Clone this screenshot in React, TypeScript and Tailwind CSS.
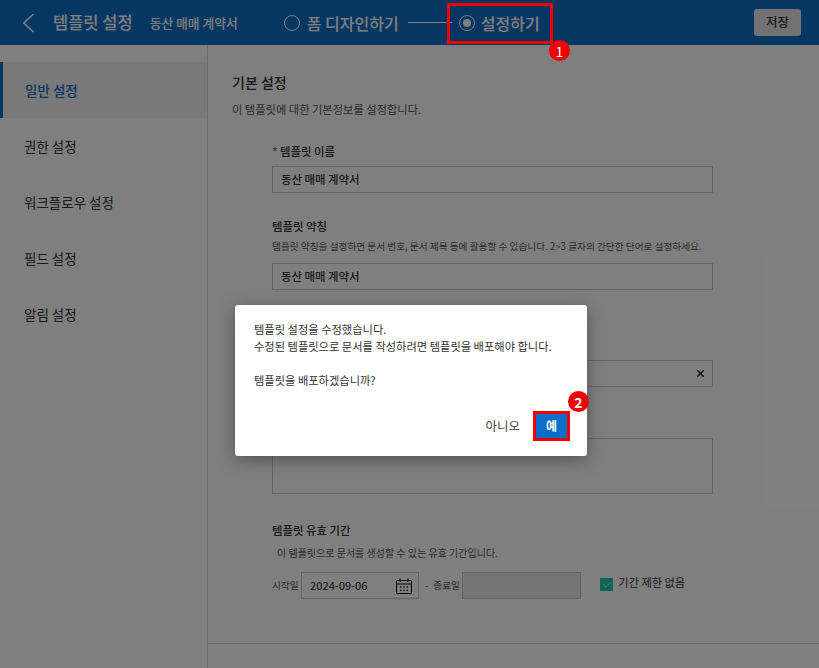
import { Check, X } from 'lucide-react';

const MENU = ['일반 설정', '권한 설정', '워크플로우 설정', '필드 설정', '알림 설정'];

function CalendarIcon() {
  return (
    <svg width="16" height="16" viewBox="0 0 16 16" fill="none" stroke="#111" strokeWidth="1.1">
      <rect x="0.5" y="2.5" width="15" height="13" rx="1" />
      <path d="M0.5 6h15M4 0.5v3.5M12 0.5v3.5" />
      <path d="M4 9h1.4M7.3 9h1.4M10.6 9h1.4M4 12.3h1.4M7.3 12.3h1.4M10.6 12.3h1.4" strokeWidth="1.3" />
    </svg>
  );
}

function Badge({ n }: { n: number }) {
  return (
    <span className="flex h-[21px] w-[21px] items-center justify-center rounded-full bg-[#f00000] text-[14px] leading-none text-white">
      {n}
    </span>
  );
}

function Field({ value }: { value: string }) {
  return (
    <div className="flex h-[27px] w-[441px] items-center border border-[#c8c8c8] bg-white px-[8px] text-[11.4px] font-medium text-[#333]">
      {value}
    </div>
  );
}

export default function App() {
  return (
    <div className="relative h-[668px] w-[819px] overflow-hidden bg-white font-['Noto_Sans_CJK_KR','Noto_Sans',sans-serif] text-[#333]">
      <header className="flex h-[45px] items-center bg-[#0c6ec6] pl-[22px] pr-[18px] text-white">
        <svg width="13" height="20" viewBox="0 0 13 20" fill="none" stroke="currentColor" strokeWidth="1.6">
          <path d="M11.5 1 1.8 10l9.7 9" />
        </svg>
        <span className="ml-[18px] text-[16.5px] font-medium">템플릿 설정</span>
        <span className="ml-[17px] text-[12.8px] font-medium">동산 매매 계약서</span>
        <span className="ml-[46px] h-[16px] w-[16px] rounded-full border border-white" />
        <span className="ml-[7px] text-[16px] font-medium">폼 디자인하기</span>
        <span className="ml-[9px] mr-[7px] h-px w-[44px] bg-white" />
        <span className="flex h-[16px] w-[16px] items-center justify-center rounded-full border border-white">
          <span className="h-[8px] w-[8px] rounded-full bg-white" />
        </span>
        <span className="ml-[6px] text-[16px] font-medium">설정하기</span>
        <button className="ml-auto h-[27px] w-[47px] rounded-[3px] bg-[#e4e4e4] text-[12.5px] font-medium text-[#333]">저장</button>
      </header>

      <div className="flex h-[623px]">
        <aside className="w-[208px] shrink-0 border-r border-[#d6d6d6] pt-[17px]">
          {MENU.map((item, i) => (
            <div
              key={item}
              className={
                i === 0
                  ? 'flex h-[56px] items-center border-l-[3px] border-[#0c6ec6] bg-[#f2f2f2] pl-[22px] text-[13.5px] font-medium text-[#0c6ec6]'
                  : 'flex h-[56px] items-center pl-[24px] text-[13.5px] text-[#333]'
              }
            >
              {item}
            </div>
          ))}
        </aside>

        <main className="flex min-w-0 flex-1 flex-col">
          <div className="h-[599px] border-b border-[#d0d0d0] pl-[24px] pt-[26px]">
            <h2 className="text-[14px] font-medium leading-[22px]">기본 설정</h2>
            <p className="mt-[7px] text-[11.26px] leading-[18px] text-[#555]">이 템플릿에 대한 기본정보를 설정합니다.</p>

            <div className="ml-[40px] mt-[25px] w-[441px]">
              <div className="text-[11.4px] font-medium leading-[17px]">
                <span className="text-[#0c6ec6]">* </span>템플릿 이름
              </div>
              <div className="mt-[6px]">
                <Field value="동산 매매 계약서" />
              </div>

              <div className="mt-[25px] text-[11.4px] font-medium leading-[17px]">템플릿 약칭</div>
              <p className="mt-[4px] whitespace-nowrap text-[9.67px] leading-[15px] text-[#555]">
                템플릿 약칭을 설정하면 문서 번호, 문서 제목 등에 활용할 수 있습니다. 2~3 글자의 간단한 단어로 설정하세요.
              </p>
              <div className="mt-[9px]">
                <Field value="동산 매매 계약서" />
              </div>

              <div className="mt-[70px] flex h-[27px] items-center justify-end border border-[#c8c8c8] pr-[6px]">
                <X size={11} strokeWidth={3} className="text-[#111]" />
              </div>

              <div className="mt-[51px] h-[56px] border border-[#c8c8c8]" />

              <div className="mt-[28px] text-[11.4px] font-medium leading-[17px]">템플릿 유효 기간</div>
              <p className="mt-[6px] pl-[5px] text-[10px] leading-[16px] text-[#555]">이 템플릿으로 문서를 생성할 수 있는 유효 기간입니다.</p>

              <div className="mt-[11px] flex items-center whitespace-nowrap text-[9.6px] text-[#555]">
                <span className="w-[29px]">시작일</span>
                <div className="flex h-[27px] w-[118px] items-center justify-between border border-[#c8c8c8] pl-[8px] pr-[6px] text-[11.2px] text-[#222]">
                  2024-09-06
                  <CalendarIcon />
                </div>
                <span className="ml-[6px]">-</span>
                <span className="ml-[5px] w-[29px]">종료일</span>
                <div className="h-[27px] w-[119px] border border-[#c8c8c8] bg-[#e9e9e9]" />
                <span className="ml-[19px] flex h-[13px] w-[13px] -translate-y-[1px] items-center justify-center bg-[#24c9b0]">
                  <Check size={10} strokeWidth={2} className="text-white" />
                </span>
                <span className="ml-[5px] -translate-y-[3px] text-[11.2px] text-[#333]">기간 제한 없음</span>
              </div>
            </div>
          </div>
        </main>
      </div>

      {/* dim layer and dialog */}
      <div className="absolute inset-0 flex justify-center bg-black/50 pl-[3px] pt-[305px]">
        <div className="h-[151px] w-[352px] rounded-[3px] bg-white px-[19px] pt-[16px] shadow-[0_4px_18px_rgba(0,0,0,0.35)]">
          <p className="text-[11.26px] leading-[17px] text-[#333]">템플릿 설정을 수정했습니다.</p>
          <p className="text-[11.26px] leading-[17px] text-[#333]">수정된 템플릿으로 문서를 작성하려면 템플릿을 배포해야 합니다.</p>
          <p className="mt-[17px] text-[11.26px] leading-[17px] text-[#333]">템플릿을 배포하겠습니까?</p>
          <div className="mt-[22px] flex items-center justify-end gap-[13px]">
            <span className="text-[12.5px] text-[#444]">아니오</span>
            <button className="relative -mr-[2px] h-[30px] w-[37px] border-[3px] border-[#f00000] bg-[#0c6ec6] text-[12px] font-bold text-white">
              예
              <span className="absolute -right-[22px] -top-[23px]">
                <Badge n={2} />
              </span>
            </button>
          </div>
        </div>
      </div>

      {/* callout around the step */}
      <div className="absolute left-[447px] top-[3px] h-[41px] w-[106px] border-[3px] border-[#f00000]">
        <span className="absolute -right-[20px] top-[34px]">
          <Badge n={1} />
        </span>
      </div>
    </div>
  );
}
